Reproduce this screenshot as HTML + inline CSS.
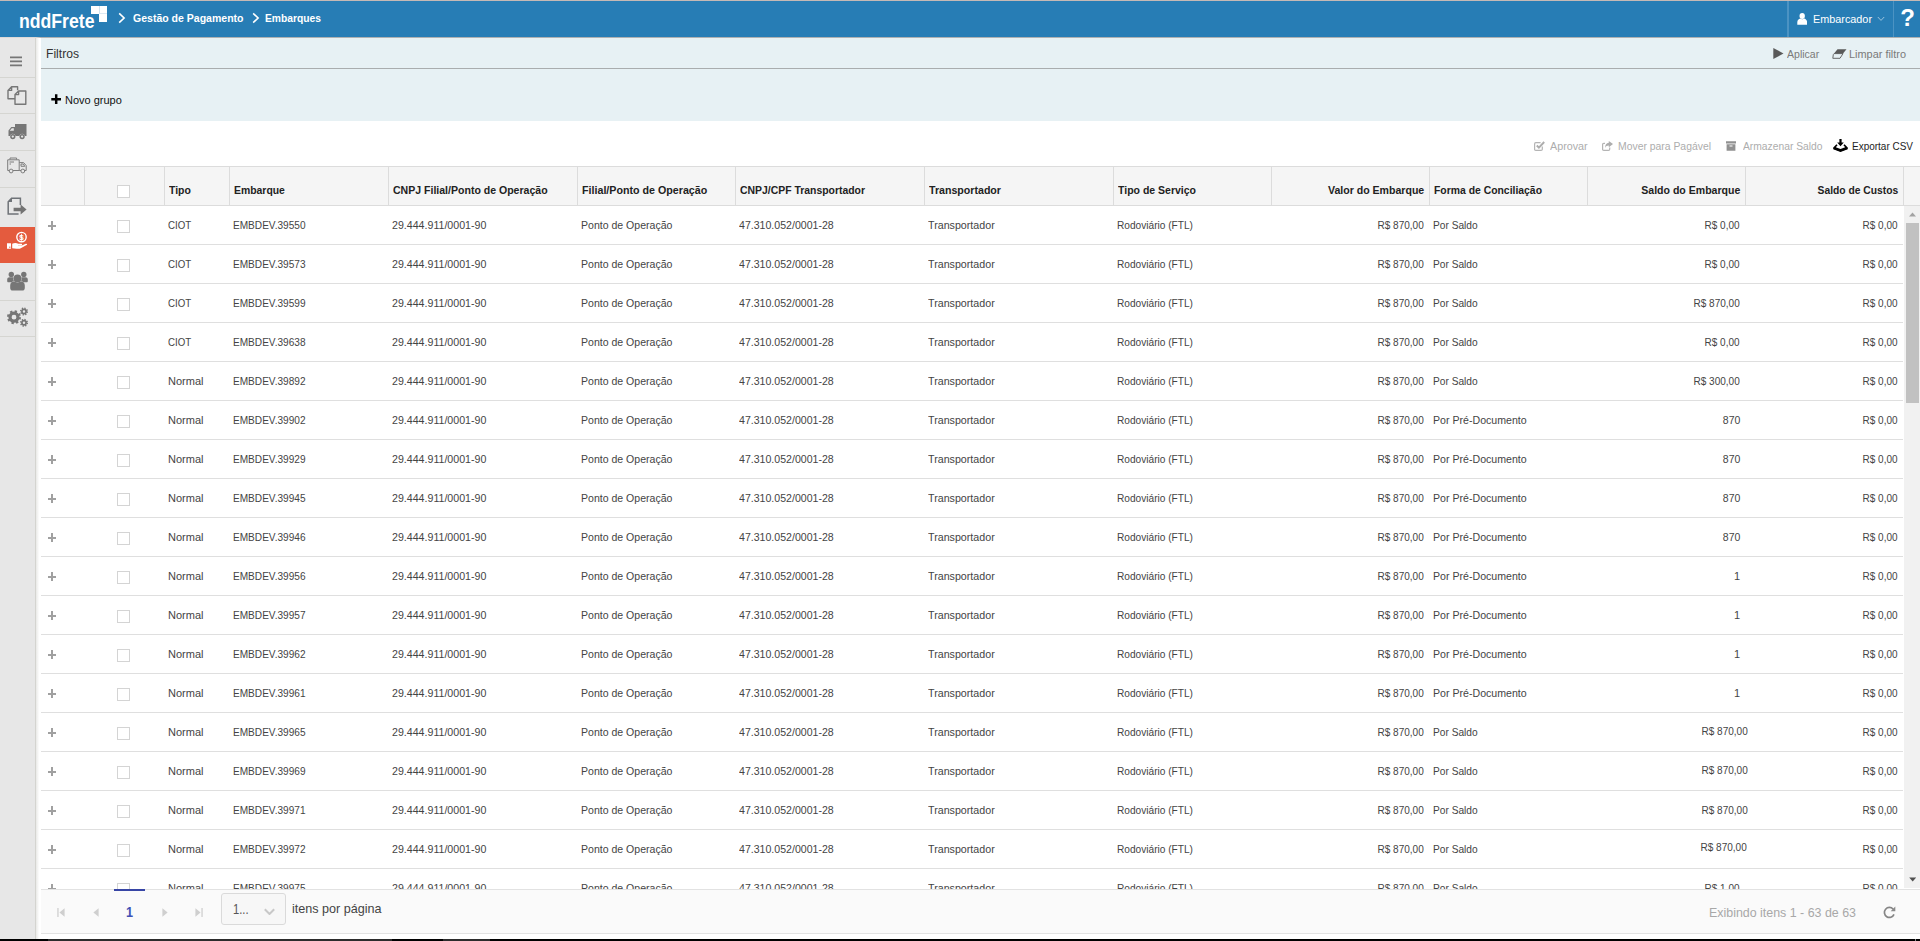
<!DOCTYPE html>
<html lang="pt-BR">
<head>
<meta charset="utf-8">
<title>nddFrete - Embarques</title>
<style>
*{box-sizing:border-box;margin:0;padding:0}
html,body{width:1920px;height:941px;overflow:hidden;background:#fff}
body{font-family:'Liberation Sans',sans-serif;font-size:11px;color:#444;position:relative}
.abs{position:absolute}
span,div{white-space:nowrap}
.t{display:inline-block}
#topline{left:0;top:0;width:1920px;height:1px;background:#c5b9b5}
#hdr{left:0;top:1px;width:1920px;height:36px;background:#277db5;color:#fff}
#hdr .logo{left:18.8px;top:5px;height:30px;line-height:30px;font-size:20.5px;font-weight:700}
#hdr .sq{background:#fff}
#hdr .bc{top:0;height:36px;line-height:35px;font-weight:700;font-size:11px}
#hdr .sep{top:0;width:2px;height:36px;background:#4b93c3}
#side{left:0;top:37px;width:36px;height:902px;background:#e7e7e7;border-right:1px solid #d4d4d0}
#side .ln{left:0;width:35px;height:1px;background:#d5d5d1}
#side .act{left:0;top:190px;width:35px;height:36px;background:#e45b3e}
#shadow{left:36px;top:37px;width:5px;height:902px;background:linear-gradient(to right,#e9e9e7,#fff 65%)}
#hline{z-index:5;left:0;top:37px;width:1920px;height:1px;background:linear-gradient(to right,#dcd9d8 0,#dcd9d8 36px,#aeb1b2 41px)}
#filter{left:41px;top:37px;width:1879px;height:84px;background:#e7f1f4}
#filter .ul{left:0;top:31px;width:1879px;height:1px;background:#a9adae}
#grid{left:41px;top:166px;width:1879px;height:723px;overflow:hidden}
table{border-collapse:separate;border-spacing:0;table-layout:fixed;width:1862px}
thead th{height:40px;background:#f5f5f5;border-top:1px solid #dcdcdc;border-bottom:1px solid #dcdcdc;border-left:1px solid #dcdcdc;font-weight:700;color:#222;text-align:left;padding:7px 5px 0 4px;font-size:11px;vertical-align:middle;overflow:hidden}
thead th:first-child{border-left:none}
thead th.r{text-align:right}
tbody td{height:39px;border-bottom:1px solid #dfdfdf;padding:0 5px 1px 4px;vertical-align:middle;font-size:11px;color:#444}
tbody td.ex{padding-left:7px}
tbody td.ck{padding-left:33px}
tbody td.r{text-align:right}
.cb{display:inline-block;width:13px;height:13px;border:1px solid #d4d4d4;background:#fff;vertical-align:middle;position:relative;top:2px}
.plus{display:inline-block;position:relative;left:-0.2px;top:0.2px;width:8.6px;height:8.6px;vertical-align:middle}
.plus:before{content:"";position:absolute;left:0;top:3.2px;width:8.6px;height:2.2px;background:#a0a0a0}
.plus:after{content:"";position:absolute;left:3.2px;top:0;width:2.2px;height:8.6px;background:#a0a0a0}
#sb{left:1904px;top:206px;width:16px;height:682px;background:#f1f1f1}
#sb .th{left:2px;top:17px;width:13px;height:180px;background:#c1c1c1}
#pager{left:41px;top:889px;width:1879px;height:45px;background:#fafafa;border-top:1px solid #e2e2e2;border-bottom:1px solid #e2e2e2}
#bottom{left:0;top:939px;width:1920px;height:2px;background:#000}
#bottom i{top:0;height:2px;background:#2c2c2c}
.c_ciot{transform:scaleX(0.8828);transform-origin:0 50%}
.c_emb{transform:scaleX(0.9166);transform-origin:0 50%}
.c_cnpjf{transform:scaleX(0.9665);transform-origin:0 50%}
.c_filial{transform:scaleX(0.958);transform-origin:0 50%}
.c_cnpjt{transform:scaleX(0.9616);transform-origin:0 50%}
.c_transp{transform:scaleX(0.9711);transform-origin:0 50%}
.c_serv{transform:scaleX(0.9209);transform-origin:0 50%}
.c_valor{transform:scaleX(0.912);transform-origin:100% 50%}
.c_saldo{transform:scaleX(0.9252);transform-origin:0 50%}
.c_r0{transform:scaleX(0.9084);transform-origin:100% 50%}
.c_normal{transform:scaleX(1.0013);transform-origin:0 50%}
.c_pre{transform:scaleX(0.9638);transform-origin:0 50%}
.c_870{transform:scaleX(0.9532);transform-origin:100% 50%}
.c_1{transform:scaleX(0.9959);transform-origin:100% 50%}
</style>
</head>
<body>
<div id="topline" class="abs"></div>
<header id="hdr" class="abs">
  <span class="abs logo" style="transform:scaleX(0.8609);transform-origin:0 50%">nddFrete</span>
  <i class="abs sq" style="left:91.2px;top:5px;width:8.4px;height:7.8px"></i>
  <i class="abs sq" style="left:99.4px;top:5px;width:7.7px;height:16px"></i>
  <i class="abs" style="left:98.9px;top:5px;width:0.9px;height:7.8px;background:#d3e4f0"></i>
  <i class="abs" style="left:99.8px;top:12.3px;width:7.3px;height:0.9px;background:#dce9f3"></i>
  <svg class="abs" style="left:118px;top:11px" width="8" height="12" viewBox="0 0 8 12"><path d="M1.2 1.4 L6.1 6 L1.2 10.6" fill="none" stroke="#fff" stroke-width="1.6"/></svg>
  <span class="abs bc" style="left:132.5px;transform:scaleX(0.9563);transform-origin:0 50%">Gestão de Pagamento</span>
  <svg class="abs" style="left:252px;top:11px" width="8" height="12" viewBox="0 0 8 12"><path d="M1.2 1.4 L6.1 6 L1.2 10.6" fill="none" stroke="#fff" stroke-width="1.6"/></svg>
  <span class="abs bc" style="left:265px;transform:scaleX(0.9346);transform-origin:0 50%">Embarques</span>
  <i class="abs sep" style="left:1787px"></i>
  <svg class="abs" style="left:1797px;top:11.5px" width="10.4" height="12" viewBox="0 0 10.4 12"><ellipse cx="5.2" cy="3.1" rx="2.7" ry="3" fill="#fff"/><path d="M0.3 11.8 V9.2 C0.3 7.2 1.8 6 3.2 5.6 C4.4 6.6 6 6.6 7.2 5.6 C8.6 6 10.1 7.2 10.1 9.2 V11.8 Z" fill="#fff"/></svg>
  <span class="abs bc" style="left:1812.5px;font-weight:400;line-height:37px;transform:scaleX(0.9846);transform-origin:0 50%">Embarcador</span>
  <svg class="abs" style="left:1877px;top:15px" width="8" height="6" viewBox="0 0 8 6"><path d="M0.8 1 L4 4.4 L7.2 1" fill="none" stroke="#9cc3de" stroke-width="1"/></svg>
  <i class="abs sep" style="left:1893px;width:1px"></i>
  <span class="abs" style="left:1900.3px;top:3.5px;font-size:24px;font-weight:700;line-height:26px">?</span>
</header>

<nav id="side" class="abs">
  <i class="abs ln" style="top:40px"></i>
  <i class="abs ln" style="top:76px"></i>
  <i class="abs ln" style="top:113px"></i>
  <i class="abs ln" style="top:150px"></i>
  <i class="abs act"></i>
  <i class="abs ln" style="top:263px"></i>
  <i class="abs ln" style="top:299px"></i>
  <svg class="abs" style="left:10px;top:19px" width="12" height="11" viewBox="0 0 12 11"><path d="M0 0.6 H12 V2.3 H0 Z M0 4.6 H12 V6.3 H0 Z M0 8.6 H12 V10.3 H0 Z" fill="#767676"/></svg>
  <svg class="abs" style="left:7px;top:49px" width="20" height="19" viewBox="0 0 20 19"><g fill="none" stroke="#777" stroke-width="1.4" stroke-linejoin="round"><path d="M4.6 0.7 H10.6 V4.2 M8 12.8 H1 V4.4 L4.6 0.7 V4.4 H1"/><path d="M11.6 5 H18.8 V18.2 H8 V8.6 L11.6 5 V8.6 H8"/></g></svg>
  <svg class="abs" style="left:8px;top:86px" width="19" height="17" viewBox="0 0 19 17"><path d="M7 1 H18.5 V13 H16.9 A2.9 2.9 0 0 0 11.3 13 H7.6 A2.9 2.9 0 0 0 2 13 H0.5 V7.6 L3.3 4.1 H7 Z M1.7 7.8 H5.8 V5.2 H3.8 Z" fill="#767676" fill-rule="evenodd"/><circle cx="4.8" cy="13.6" r="1.9" fill="none" stroke="#767676" stroke-width="1.5"/><circle cx="14.1" cy="13.6" r="1.9" fill="none" stroke="#767676" stroke-width="1.5"/></svg>
  <svg class="abs" style="left:7px;top:120px" width="20" height="17" viewBox="0 0 20 17"><g fill="none" stroke="#7d7d7d" stroke-width="1"><path d="M2.2 13.5 H0.7 V2.8 H12.2 V13.5 H6"/><path d="M3 2.6 V1 H9.6 V2.6"/><path d="M12.2 5.6 H16.6 L19.2 8.6 V13.5 H17.6 M12.2 13.5 H14"/><path d="M14 7 H16.3 L17.8 9.3 H14 Z"/><circle cx="4.1" cy="14" r="1.9"/><circle cx="15.8" cy="14" r="1.9"/><path d="M2.5 5 H7 M2.5 7 H4"/></g></svg>
  <svg class="abs" style="left:7px;top:160px" width="20" height="18" viewBox="0 0 20 18"><path d="M13.4 8 V1.2 H4.6 L1.2 4.8 V17 H11.6" fill="none" stroke="#6f7378" stroke-width="1.5"/><path d="M1 5 L5 0.8 V5 Z" fill="#6f7378"/><path d="M6.6 10.8 H13.6 V7.6 L19.6 12.5 L13.6 17.4 V14.2 H6.6 Z" fill="#737373"/></svg>
  <svg class="abs" style="left:6px;top:194px" width="22" height="20" viewBox="0 0 22 20"><circle cx="15.5" cy="6.1" r="4.7" fill="none" stroke="#fff" stroke-width="1.4"/><text x="15.5" y="9" font-family="Liberation Sans, sans-serif" font-size="8" font-weight="700" fill="#fff" text-anchor="middle">$</text><path d="M15.5 2.7 V9.6" stroke="#fff" stroke-width="0.8"/><path d="M1 12.2 H5 V17.8 H1 Z M3.4 15.4 V16.9 H4.3 V15.4 Z" fill="#fff" fill-rule="evenodd"/><path d="M6.2 12.8 C8.5 11.8 10.5 11.9 12.2 12.8 H15.4 C16.4 12.8 16.4 14.2 15.4 14.2 H12 V14.6 H15.8 L19.8 12.8 C21 12.4 21.6 13.5 20.6 14.1 L14.8 17.3 C13.4 18 12 17.9 10.5 17.7 L6.2 17.2 Z" fill="#fff"/></svg>
  <svg class="abs" style="left:7px;top:234px" width="21" height="20" viewBox="0 0 21 20"><g fill="#767676"><circle cx="4.3" cy="3.4" r="2.7"/><circle cx="16.8" cy="3.4" r="2.7"/><path d="M0.2 10.6 V8.4 C0.2 7 1.2 6.2 2.6 6.2 H5.4 C6 6.2 6.4 6.4 6.6 6.6 C6.2 8 6.4 9.2 7 10.2 C6 10.3 5.2 10.6 4.6 11.2 H0.8 Z"/><path d="M20.8 10.6 V8.4 C20.8 7 19.8 6.2 18.4 6.2 H15.6 C15 6.2 14.6 6.4 14.4 6.6 C14.8 8 14.6 9.2 14 10.2 C15 10.3 15.8 10.6 16.4 11.2 H20.2 Z"/><circle cx="10.5" cy="7.4" r="3.9"/><path d="M3.2 17 V14.4 C3.2 12.2 4.8 10.6 7 10.6 H7.6 C9.4 11.8 11.6 11.8 13.4 10.6 H14 C16.2 10.6 17.8 12.2 17.8 14.4 V17 C17.8 18.6 16.8 19.6 15.2 19.6 H5.8 C4.2 19.6 3.2 18.6 3.2 17 Z"/></g></svg>
  <svg class="abs" style="left:6px;top:270px" width="23" height="21" viewBox="0 0 23 21"><g fill="none" stroke="#767676"><circle cx="8" cy="10.2" r="4" stroke-width="3.2"/><circle cx="8" cy="10.2" r="5.9" stroke-width="2.2" stroke-dasharray="2.3 2.33"/><circle cx="18" cy="4.5" r="2.1" stroke-width="1.7"/><circle cx="18" cy="4.5" r="3.3" stroke-width="1.5" stroke-dasharray="1.3 1.29"/><circle cx="18" cy="15.8" r="2.1" stroke-width="1.7"/><circle cx="18" cy="15.8" r="3.3" stroke-width="1.5" stroke-dasharray="1.3 1.29"/></g></svg>

</nav>
<div id="shadow" class="abs"></div>
<div id="hline" class="abs"></div>

<section id="filter" class="abs">
  <span class="abs" style="left:4.5px;top:9px;font-size:13px;line-height:16px;color:#333;transform:scaleX(0.9325);transform-origin:0 50%">Filtros</span>
  <svg class="abs" style="left:1731.5px;top:11px" width="11" height="11" viewBox="0 0 11 11"><path d="M0.3 0 L10.5 5.5 L0.3 11 Z" fill="#5a5a5a"/></svg>
  <span class="abs" style="left:1745.5px;top:11px;line-height:13px;color:#7a7a7a;transform:scaleX(0.9576);transform-origin:0 50%">Aplicar</span>
  <svg class="abs" style="left:1790.5px;top:11.5px" width="15" height="10" viewBox="0 0 15 10"><path d="M5.5 0.3 H14.5 L11 4.6 H2 Z" fill="#5a5a5a"/><path d="M2 4.6 H11 L8 9.3 H0.8 L1.3 5.6 Z" fill="none" stroke="#5a5a5a" stroke-width="0.9"/></svg>
  <span class="abs" style="left:1808px;top:11px;line-height:13px;color:#7a7a7a;transform:scaleX(0.9918);transform-origin:0 50%">Limpar filtro</span>
  <i class="abs ul"></i>
  <svg class="abs" style="left:10px;top:57px" width="10.4" height="10.4" viewBox="0 0 11 11"><path d="M4.2 0.3 H6.8 V4.2 H10.7 V6.8 H6.8 V10.7 H4.2 V6.8 H0.3 V4.2 H4.2 Z" fill="#000"/></svg>
  <span class="abs" style="left:24px;top:57px;line-height:13px;color:#111;transform:scaleX(0.9987);transform-origin:0 50%">Novo grupo</span>
</section>

<div id="toolbar" class="abs" style="left:41px;top:121px;width:1879px;height:45px">
  <svg class="abs" style="left:1492.5px;top:20px" width="11" height="10" viewBox="0 0 11 10"><path d="M8.3 5.4 V8.2 Q8.3 9.4 7.1 9.4 H1.8 Q0.6 9.4 0.6 8.2 V2.9 Q0.6 1.7 1.8 1.7 H6.6" fill="none" stroke="#b4b4b4" stroke-width="1.2"/><path d="M2.8 4.5 L4.9 6.7 L10.2 1" fill="none" stroke="#adadad" stroke-width="1.9"/></svg>
  <span class="abs" style="left:1509px;top:19px;line-height:13px;color:#adadad;transform:scaleX(0.9784);transform-origin:0 50%">Aprovar</span>
  <svg class="abs" style="left:1560.5px;top:19.5px" width="11" height="10" viewBox="0 0 11 10"><path d="M7.7 6.4 V8.2 Q7.7 9.4 6.5 9.4 H1.8 Q0.6 9.4 0.6 8.2 V3.6 Q0.6 2.4 1.8 2.4 H3" fill="none" stroke="#b4b4b4" stroke-width="1.2"/><path d="M6.8 0 L11 3.1 L6.8 6.2 V4.5 C5 4.5 3.9 5.2 3.2 7 C3 3.8 4.4 1.9 6.8 1.8 Z" fill="#adadad"/></svg>
  <span class="abs" style="left:1577px;top:19px;line-height:13px;color:#adadad;transform:scaleX(0.9446);transform-origin:0 50%">Mover para Pagável</span>
  <svg class="abs" style="left:1685px;top:19.5px" width="10" height="10" viewBox="0 0 10 10"><path d="M0 0.3 H10 V2.6 H0 Z M0.6 3.3 H9.4 V9.8 H0.6 Z M3.5 4.4 V5.6 H6.5 V4.4 Z" fill="#919191" fill-rule="evenodd"/></svg>
  <span class="abs" style="left:1701.5px;top:19px;line-height:13px;color:#adadad;transform:scaleX(0.9353);transform-origin:0 50%">Armazenar Saldo</span>
  <svg class="abs" style="left:1791.5px;top:18px" width="15" height="13" viewBox="0 0 15 13"><path d="M6.4 0 H8.6 V3.6 H10.8 L7.5 7.2 L4.2 3.6 H6.4 Z" fill="#000"/><path d="M3.4 5.2 L0.3 8.4 V10.2 L7.5 12.9 L14.7 10.2 V8.4 L11.6 5.2 L10.4 6.2 L12.2 8.2 L7.5 9.9 L2.8 8.2 L4.6 6.2 Z" fill="#000"/><path d="M0.6 8.6 L7.5 11 L14.4 8.6 V10 L7.5 12.6 L0.6 10 Z" fill="#000"/></svg>
  <span class="abs" style="left:1810.5px;top:19px;line-height:13px;color:#1e1e1e;transform:scaleX(0.9071);transform-origin:0 50%">Exportar CSV</span>
</div>

<main id="grid" class="abs">
<table>
<colgroup><col style="width:43px"><col style="width:80px"><col style="width:65px"><col style="width:159px"><col style="width:189px"><col style="width:158px"><col style="width:189px"><col style="width:189px"><col style="width:158px"><col style="width:158px"><col style="width:158px"><col style="width:158px"><col style="width:158px"></colgroup>
<thead><tr>
<th></th>
<th class="ck" style="padding:7px 0 0 32px"><i class="cb"></i></th>
<th><span class="t" style="transform:scaleX(0.9515);transform-origin:0 50%">Tipo</span></th>
<th><span class="t" style="transform:scaleX(0.9462);transform-origin:0 50%">Embarque</span></th>
<th><span class="t" style="transform:scaleX(0.958);transform-origin:0 50%">CNPJ Filial/Ponto de Operação</span></th>
<th><span class="t" style="transform:scaleX(0.9714);transform-origin:0 50%">Filial/Ponto de Operação</span></th>
<th><span class="t" style="transform:scaleX(0.9467);transform-origin:0 50%">CNPJ/CPF Transportador</span></th>
<th><span class="t" style="transform:scaleX(0.9654);transform-origin:0 50%">Transportador</span></th>
<th><span class="t" style="transform:scaleX(0.9545);transform-origin:0 50%">Tipo de Serviço</span></th>
<th class="r"><span class="t" style="transform:scaleX(0.9606);transform-origin:100% 50%">Valor do Embarque</span></th>
<th><span class="t" style="transform:scaleX(0.9448);transform-origin:0 50%">Forma de Conciliação</span></th>
<th class="r"><span class="t" style="transform:scaleX(0.9584);transform-origin:100% 50%">Saldo do Embarque</span></th>
<th class="r"><span class="t" style="transform:scaleX(0.9352);transform-origin:100% 50%">Saldo de Custos</span></th>
</tr></thead>
<tbody>
<tr><td class="ex"><i class="plus"></i></td><td class="ck"><i class="cb"></i></td><td><span class="t c_ciot">CIOT</span></td><td><span class="t c_emb">EMBDEV.39550</span></td><td><span class="t c_cnpjf">29.444.911/0001-90</span></td><td><span class="t c_filial">Ponto de Operação</span></td><td><span class="t c_cnpjt">47.310.052/0001-28</span></td><td><span class="t c_transp">Transportador</span></td><td><span class="t c_serv">Rodoviário (FTL)</span></td><td class="r"><span class="t c_valor">R$ 870,00</span></td><td><span class="t c_saldo">Por Saldo</span></td><td class="r"><span class="t c_r0">R$ 0,00</span></td><td class="r"><span class="t c_r0">R$ 0,00</span></td></tr>
<tr><td class="ex"><i class="plus"></i></td><td class="ck"><i class="cb"></i></td><td><span class="t c_ciot">CIOT</span></td><td><span class="t c_emb">EMBDEV.39573</span></td><td><span class="t c_cnpjf">29.444.911/0001-90</span></td><td><span class="t c_filial">Ponto de Operação</span></td><td><span class="t c_cnpjt">47.310.052/0001-28</span></td><td><span class="t c_transp">Transportador</span></td><td><span class="t c_serv">Rodoviário (FTL)</span></td><td class="r"><span class="t c_valor">R$ 870,00</span></td><td><span class="t c_saldo">Por Saldo</span></td><td class="r"><span class="t c_r0">R$ 0,00</span></td><td class="r"><span class="t c_r0">R$ 0,00</span></td></tr>
<tr><td class="ex"><i class="plus"></i></td><td class="ck"><i class="cb"></i></td><td><span class="t c_ciot">CIOT</span></td><td><span class="t c_emb">EMBDEV.39599</span></td><td><span class="t c_cnpjf">29.444.911/0001-90</span></td><td><span class="t c_filial">Ponto de Operação</span></td><td><span class="t c_cnpjt">47.310.052/0001-28</span></td><td><span class="t c_transp">Transportador</span></td><td><span class="t c_serv">Rodoviário (FTL)</span></td><td class="r"><span class="t c_valor">R$ 870,00</span></td><td><span class="t c_saldo">Por Saldo</span></td><td class="r"><span class="t c_valor">R$ 870,00</span></td><td class="r"><span class="t c_r0">R$ 0,00</span></td></tr>
<tr><td class="ex"><i class="plus"></i></td><td class="ck"><i class="cb"></i></td><td><span class="t c_ciot">CIOT</span></td><td><span class="t c_emb">EMBDEV.39638</span></td><td><span class="t c_cnpjf">29.444.911/0001-90</span></td><td><span class="t c_filial">Ponto de Operação</span></td><td><span class="t c_cnpjt">47.310.052/0001-28</span></td><td><span class="t c_transp">Transportador</span></td><td><span class="t c_serv">Rodoviário (FTL)</span></td><td class="r"><span class="t c_valor">R$ 870,00</span></td><td><span class="t c_saldo">Por Saldo</span></td><td class="r"><span class="t c_r0">R$ 0,00</span></td><td class="r"><span class="t c_r0">R$ 0,00</span></td></tr>
<tr><td class="ex"><i class="plus"></i></td><td class="ck"><i class="cb"></i></td><td><span class="t c_normal">Normal</span></td><td><span class="t c_emb">EMBDEV.39892</span></td><td><span class="t c_cnpjf">29.444.911/0001-90</span></td><td><span class="t c_filial">Ponto de Operação</span></td><td><span class="t c_cnpjt">47.310.052/0001-28</span></td><td><span class="t c_transp">Transportador</span></td><td><span class="t c_serv">Rodoviário (FTL)</span></td><td class="r"><span class="t c_valor">R$ 870,00</span></td><td><span class="t c_saldo">Por Saldo</span></td><td class="r"><span class="t c_valor">R$ 300,00</span></td><td class="r"><span class="t c_r0">R$ 0,00</span></td></tr>
<tr><td class="ex"><i class="plus"></i></td><td class="ck"><i class="cb"></i></td><td><span class="t c_normal">Normal</span></td><td><span class="t c_emb">EMBDEV.39902</span></td><td><span class="t c_cnpjf">29.444.911/0001-90</span></td><td><span class="t c_filial">Ponto de Operação</span></td><td><span class="t c_cnpjt">47.310.052/0001-28</span></td><td><span class="t c_transp">Transportador</span></td><td><span class="t c_serv">Rodoviário (FTL)</span></td><td class="r"><span class="t c_valor">R$ 870,00</span></td><td><span class="t c_pre">Por Pré-Documento</span></td><td class="r"><span class="t c_870">870</span></td><td class="r"><span class="t c_r0">R$ 0,00</span></td></tr>
<tr><td class="ex"><i class="plus"></i></td><td class="ck"><i class="cb"></i></td><td><span class="t c_normal">Normal</span></td><td><span class="t c_emb">EMBDEV.39929</span></td><td><span class="t c_cnpjf">29.444.911/0001-90</span></td><td><span class="t c_filial">Ponto de Operação</span></td><td><span class="t c_cnpjt">47.310.052/0001-28</span></td><td><span class="t c_transp">Transportador</span></td><td><span class="t c_serv">Rodoviário (FTL)</span></td><td class="r"><span class="t c_valor">R$ 870,00</span></td><td><span class="t c_pre">Por Pré-Documento</span></td><td class="r"><span class="t c_870">870</span></td><td class="r"><span class="t c_r0">R$ 0,00</span></td></tr>
<tr><td class="ex"><i class="plus"></i></td><td class="ck"><i class="cb"></i></td><td><span class="t c_normal">Normal</span></td><td><span class="t c_emb">EMBDEV.39945</span></td><td><span class="t c_cnpjf">29.444.911/0001-90</span></td><td><span class="t c_filial">Ponto de Operação</span></td><td><span class="t c_cnpjt">47.310.052/0001-28</span></td><td><span class="t c_transp">Transportador</span></td><td><span class="t c_serv">Rodoviário (FTL)</span></td><td class="r"><span class="t c_valor">R$ 870,00</span></td><td><span class="t c_pre">Por Pré-Documento</span></td><td class="r"><span class="t c_870">870</span></td><td class="r"><span class="t c_r0">R$ 0,00</span></td></tr>
<tr><td class="ex"><i class="plus"></i></td><td class="ck"><i class="cb"></i></td><td><span class="t c_normal">Normal</span></td><td><span class="t c_emb">EMBDEV.39946</span></td><td><span class="t c_cnpjf">29.444.911/0001-90</span></td><td><span class="t c_filial">Ponto de Operação</span></td><td><span class="t c_cnpjt">47.310.052/0001-28</span></td><td><span class="t c_transp">Transportador</span></td><td><span class="t c_serv">Rodoviário (FTL)</span></td><td class="r"><span class="t c_valor">R$ 870,00</span></td><td><span class="t c_pre">Por Pré-Documento</span></td><td class="r"><span class="t c_870">870</span></td><td class="r"><span class="t c_r0">R$ 0,00</span></td></tr>
<tr><td class="ex"><i class="plus"></i></td><td class="ck"><i class="cb"></i></td><td><span class="t c_normal">Normal</span></td><td><span class="t c_emb">EMBDEV.39956</span></td><td><span class="t c_cnpjf">29.444.911/0001-90</span></td><td><span class="t c_filial">Ponto de Operação</span></td><td><span class="t c_cnpjt">47.310.052/0001-28</span></td><td><span class="t c_transp">Transportador</span></td><td><span class="t c_serv">Rodoviário (FTL)</span></td><td class="r"><span class="t c_valor">R$ 870,00</span></td><td><span class="t c_pre">Por Pré-Documento</span></td><td class="r"><span class="t c_1">1</span></td><td class="r"><span class="t c_r0">R$ 0,00</span></td></tr>
<tr><td class="ex"><i class="plus"></i></td><td class="ck"><i class="cb"></i></td><td><span class="t c_normal">Normal</span></td><td><span class="t c_emb">EMBDEV.39957</span></td><td><span class="t c_cnpjf">29.444.911/0001-90</span></td><td><span class="t c_filial">Ponto de Operação</span></td><td><span class="t c_cnpjt">47.310.052/0001-28</span></td><td><span class="t c_transp">Transportador</span></td><td><span class="t c_serv">Rodoviário (FTL)</span></td><td class="r"><span class="t c_valor">R$ 870,00</span></td><td><span class="t c_pre">Por Pré-Documento</span></td><td class="r"><span class="t c_1">1</span></td><td class="r"><span class="t c_r0">R$ 0,00</span></td></tr>
<tr><td class="ex"><i class="plus"></i></td><td class="ck"><i class="cb"></i></td><td><span class="t c_normal">Normal</span></td><td><span class="t c_emb">EMBDEV.39962</span></td><td><span class="t c_cnpjf">29.444.911/0001-90</span></td><td><span class="t c_filial">Ponto de Operação</span></td><td><span class="t c_cnpjt">47.310.052/0001-28</span></td><td><span class="t c_transp">Transportador</span></td><td><span class="t c_serv">Rodoviário (FTL)</span></td><td class="r"><span class="t c_valor">R$ 870,00</span></td><td><span class="t c_pre">Por Pré-Documento</span></td><td class="r"><span class="t c_1">1</span></td><td class="r"><span class="t c_r0">R$ 0,00</span></td></tr>
<tr><td class="ex"><i class="plus"></i></td><td class="ck"><i class="cb"></i></td><td><span class="t c_normal">Normal</span></td><td><span class="t c_emb">EMBDEV.39961</span></td><td><span class="t c_cnpjf">29.444.911/0001-90</span></td><td><span class="t c_filial">Ponto de Operação</span></td><td><span class="t c_cnpjt">47.310.052/0001-28</span></td><td><span class="t c_transp">Transportador</span></td><td><span class="t c_serv">Rodoviário (FTL)</span></td><td class="r"><span class="t c_valor">R$ 870,00</span></td><td><span class="t c_pre">Por Pré-Documento</span></td><td class="r"><span class="t c_1">1</span></td><td class="r"><span class="t c_r0">R$ 0,00</span></td></tr>
<tr><td class="ex"><i class="plus"></i></td><td class="ck"><i class="cb"></i></td><td><span class="t c_normal">Normal</span></td><td><span class="t c_emb">EMBDEV.39965</span></td><td><span class="t c_cnpjf">29.444.911/0001-90</span></td><td><span class="t c_filial">Ponto de Operação</span></td><td><span class="t c_cnpjt">47.310.052/0001-28</span></td><td><span class="t c_transp">Transportador</span></td><td><span class="t c_serv">Rodoviário (FTL)</span></td><td class="r"><span class="t c_valor">R$ 870,00</span></td><td><span class="t c_saldo">Por Saldo</span></td><td class="r"><span class="t c_valor" style="position:relative;left:8px;top:-1px">R$ 870,00</span></td><td class="r"><span class="t c_r0">R$ 0,00</span></td></tr>
<tr><td class="ex"><i class="plus"></i></td><td class="ck"><i class="cb"></i></td><td><span class="t c_normal">Normal</span></td><td><span class="t c_emb">EMBDEV.39969</span></td><td><span class="t c_cnpjf">29.444.911/0001-90</span></td><td><span class="t c_filial">Ponto de Operação</span></td><td><span class="t c_cnpjt">47.310.052/0001-28</span></td><td><span class="t c_transp">Transportador</span></td><td><span class="t c_serv">Rodoviário (FTL)</span></td><td class="r"><span class="t c_valor">R$ 870,00</span></td><td><span class="t c_saldo">Por Saldo</span></td><td class="r"><span class="t c_valor" style="position:relative;left:8px;top:-1px">R$ 870,00</span></td><td class="r"><span class="t c_r0">R$ 0,00</span></td></tr>
<tr><td class="ex"><i class="plus"></i></td><td class="ck"><i class="cb"></i></td><td><span class="t c_normal">Normal</span></td><td><span class="t c_emb">EMBDEV.39971</span></td><td><span class="t c_cnpjf">29.444.911/0001-90</span></td><td><span class="t c_filial">Ponto de Operação</span></td><td><span class="t c_cnpjt">47.310.052/0001-28</span></td><td><span class="t c_transp">Transportador</span></td><td><span class="t c_serv">Rodoviário (FTL)</span></td><td class="r"><span class="t c_valor">R$ 870,00</span></td><td><span class="t c_saldo">Por Saldo</span></td><td class="r"><span class="t c_valor" style="position:relative;left:8px;top:0px">R$ 870,00</span></td><td class="r"><span class="t c_r0">R$ 0,00</span></td></tr>
<tr><td class="ex"><i class="plus"></i></td><td class="ck"><i class="cb"></i></td><td><span class="t c_normal">Normal</span></td><td><span class="t c_emb">EMBDEV.39972</span></td><td><span class="t c_cnpjf">29.444.911/0001-90</span></td><td><span class="t c_filial">Ponto de Operação</span></td><td><span class="t c_cnpjt">47.310.052/0001-28</span></td><td><span class="t c_transp">Transportador</span></td><td><span class="t c_serv">Rodoviário (FTL)</span></td><td class="r"><span class="t c_valor">R$ 870,00</span></td><td><span class="t c_saldo">Por Saldo</span></td><td class="r"><span class="t c_valor" style="position:relative;left:7px;top:-2px">R$ 870,00</span></td><td class="r"><span class="t c_r0">R$ 0,00</span></td></tr>
<tr><td class="ex"><i class="plus"></i></td><td class="ck"><i class="cb"></i></td><td><span class="t c_normal">Normal</span></td><td><span class="t c_emb">EMBDEV.39975</span></td><td><span class="t c_cnpjf">29.444.911/0001-90</span></td><td><span class="t c_filial">Ponto de Operação</span></td><td><span class="t c_cnpjt">47.310.052/0001-28</span></td><td><span class="t c_transp">Transportador</span></td><td><span class="t c_serv">Rodoviário (FTL)</span></td><td class="r"><span class="t c_valor">R$ 870,00</span></td><td><span class="t c_saldo">Por Saldo</span></td><td class="r"><span class="t c_r0">R$ 1,00</span></td><td class="r"><span class="t c_r0">R$ 0,00</span></td></tr>
</tbody>
</table>
<div class="abs" style="left:1862px;top:0;width:17px;height:40px;background:#f5f5f5;border-top:1px solid #dcdcdc;border-bottom:1px solid #dcdcdc;border-left:1px solid #dcdcdc"></div>
</main>

<div id="sb" class="abs">
  <svg class="abs" style="left:5px;top:6px" width="7" height="5" viewBox="0 0 7 5"><path d="M0 4.5 L3.5 0.5 L7 4.5 Z" fill="#a3a3a3"/></svg>
  <i class="abs th"></i>
  <svg class="abs" style="left:5px;top:670.5px" width="7.4" height="5" viewBox="0 0 7 5"><path d="M0 0.5 L3.5 4.5 L7 0.5 Z" fill="#505050"/></svg>
</div>

<footer id="pager" class="abs">
  <i class="abs" style="left:73px;top:-1px;width:31px;height:2px;background:#3745a5"></i>
  <svg class="abs" style="left:15.5px;top:18px" width="8" height="9" viewBox="0 0 8 9"><path d="M0.3 0 H1.6 V9 H0.3 Z M7.6 0.3 V8.7 L2.4 4.5 Z" fill="#cfcfcf"/></svg>
  <svg class="abs" style="left:51.5px;top:18px" width="6" height="9" viewBox="0 0 6 9"><path d="M5.6 0.3 V8.7 L0.4 4.5 Z" fill="#cfcfcf"/></svg>
  <span class="abs" style="left:85px;top:11.5px;font-size:14px;font-weight:700;line-height:20px;color:#3f51b5;transform:scaleX(0.9);transform-origin:0 50%">1</span>
  <svg class="abs" style="left:120.5px;top:18px" width="6" height="9" viewBox="0 0 6 9"><path d="M0.4 0.3 V8.7 L5.6 4.5 Z" fill="#cfcfcf"/></svg>
  <svg class="abs" style="left:154px;top:18px" width="8" height="9" viewBox="0 0 8 9"><path d="M6.4 0 H7.7 V9 H6.4 Z M0.4 0.3 V8.7 L5.6 4.5 Z" fill="#cfcfcf"/></svg>
  <div class="abs" style="left:180px;top:3px;width:65px;height:32px;border:1px solid #dadada;border-radius:3px;background:#f7f7f7">
    <span class="abs" style="left:11px;top:6px;font-size:14px;line-height:18px;color:#555;transform:scaleX(0.8013);transform-origin:0 50%">1...</span>
    <svg class="abs" style="left:42px;top:14px" width="11" height="7" viewBox="0 0 11 7"><path d="M0.8 1.2 L5.5 6 L10.2 1.2" fill="none" stroke="#c8c8c8" stroke-width="2"/></svg>
  </div>
  <span class="abs" style="left:250.5px;top:10px;font-size:13px;line-height:18px;color:#444;transform:scaleX(0.9685);transform-origin:0 50%">itens por página</span>
  <span class="abs" style="left:1667.5px;top:14px;font-size:13px;line-height:18px;color:#a8a8a8;transform:scaleX(0.9549);transform-origin:0 50%">Exibindo itens 1 - 63 de 63</span>
  <svg class="abs" style="left:1841px;top:15.5px" width="14" height="13" viewBox="0 0 14 13"><path d="M11.2 3.2 A5 5 0 1 0 12 8.4" fill="none" stroke="#858585" stroke-width="1.7"/><path d="M13.3 0.6 V5.2 H8.7 Z" fill="#8a8a8a"/></svg>
</footer>
<div id="bottom" class="abs"><i class="abs" style="left:48px;width:344px"></i><i class="abs" style="left:443px;width:47px"></i><i class="abs" style="left:1915px;width:1px;background:#8a8a8a"></i></div>
</body>
</html>
